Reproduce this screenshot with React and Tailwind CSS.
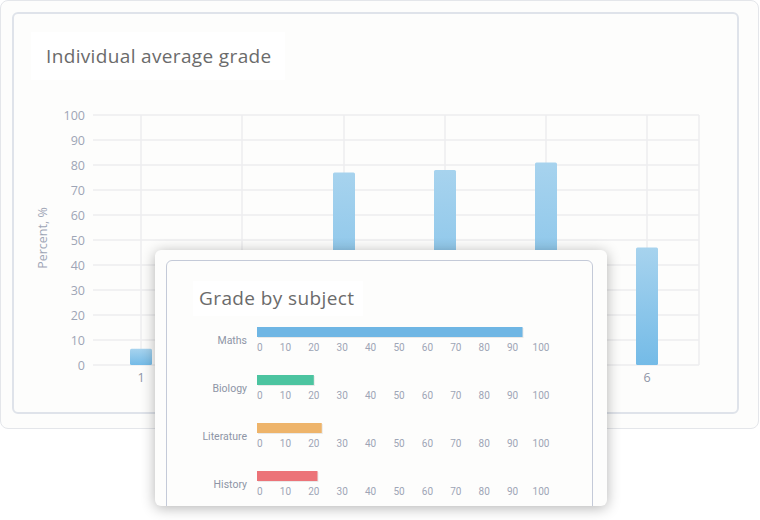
export default function App() {
  const yTicks = [0,10,20,30,40,50,60,70,80,90,100];
  const xs = [140,241,343,444,545,646];
  const vals = [6.5,0,77,78,81,47];
  const y = v => 364 - v * 2.5;
  const subj = [
    { n: "Maths", v: 93.5, c: "#6fb6e4" },
    { n: "Biology", v: 20, c: "#4cc4a0" },
    { n: "Literature", v: 22.8, c: "#eeb46a" },
    { n: "History", v: 21.3, c: "#ec7378" },
  ];
  const sx = v => 257 + v * 2.84;
  return (
    <div className="relative w-[760px] h-[520px] bg-white overflow-hidden" style={{ fontFamily: "'Open Sans', sans-serif" }}>
      <div className="absolute left-0 top-0 w-[759px] h-[429px] rounded-lg border border-[#e4e6ea] bg-[#fdfdfc]">
        <div className="absolute left-[11px] top-[11px] w-[727px] h-[402px] rounded-md border-2 border-[#dfe3ea]"></div>
        <div className="absolute left-[30px] top-[31px] w-[254px] h-[48px] bg-white flex items-center pl-[15px] text-[19px] tracking-[0.35px] text-[#6b6b6b]">Individual average grade</div>
        <svg className="absolute left-0 top-0" width="759" height="429">
          <defs>
            <linearGradient id="bg" x1="0" y1="0" x2="0" y2="1">
              <stop offset="0" stopColor="#a7d3ee" />
              <stop offset="1" stopColor="#74bbe7" />
            </linearGradient>
          </defs>
          {yTicks.map(t => (
            <g key={t}>
              <line x1="92" x2="698" y1={y(t)} y2={y(t)} stroke="#ececef" strokeWidth="1.5" />
              <text x="84" y={y(t) + 4.5} textAnchor="end" fontSize="12.5" fill="#9ea5b6" fontFamily="Open Sans">{t}</text>
            </g>
          ))}
          {[140,241,343,444,545,646,698].map(x => (
            <line key={x} x1={x} x2={x} y1="114" y2="364" stroke="#ececef" strokeWidth="1.5" />
          ))}
          {xs.map((x, i) => vals[i] > 0 && (
            <rect key={x} x={x - 11} y={y(vals[i])} width="22" height={364 - y(vals[i])} rx="1.5" fill="url(#bg)" />
          ))}
          <text x="140" y="381" textAnchor="middle" fontSize="12.5" fill="#8e95a6">1</text>
          <text x="646" y="381" textAnchor="middle" fontSize="12.5" fill="#8e95a6">6</text>
          <text transform="translate(46 237) rotate(-90)" textAnchor="middle" fontSize="12.5" fill="#9ea5b6">Percent, %</text>
        </svg>
      </div>
      <div className="absolute left-[155px] top-[250px] w-[452px] h-[256px] rounded-md bg-[#fdfdfc] overflow-hidden shadow-[0_2px_14px_rgba(0,0,0,0.3)]">
        <div className="absolute left-[11px] top-[10px] w-[427px] h-[260px] rounded-md border border-[#c4cad8]"></div>
        <div className="absolute left-[38px] top-[31px] w-[170px] h-[35px] bg-white flex items-center pl-[6px] text-[19px] tracking-[0.4px] text-[#6b6b6b]">Grade by subject</div>
        <svg className="absolute left-[-155px] top-[-250px]" width="760" height="520">
          {subj.map((s, i) => {
            const by = 327 + i * 48;
            return (
              <g key={s.n}>
                <rect x="258" y={by + 1} width={sx(s.v) - 257} height="10" fill="#000" opacity="0.08" />
                <rect x="257" y={by} width={sx(s.v) - 257} height="10" fill={s.c} />
                <text x="247" y={by + 17} textAnchor="end" fontSize="10.5" fill="#8e95a6" fontFamily="Roboto">{s.n}</text>
                {yTicks.map(t => (
                  <text key={t} x={sx(t)} y={by + 24} textAnchor={t === 0 ? "start" : "middle"} fontSize="10" fill="#9ea5b6" fontFamily="Roboto">{t}</text>
                ))}
              </g>
            );
          })}
        </svg>
      </div>
    </div>
  );
}
